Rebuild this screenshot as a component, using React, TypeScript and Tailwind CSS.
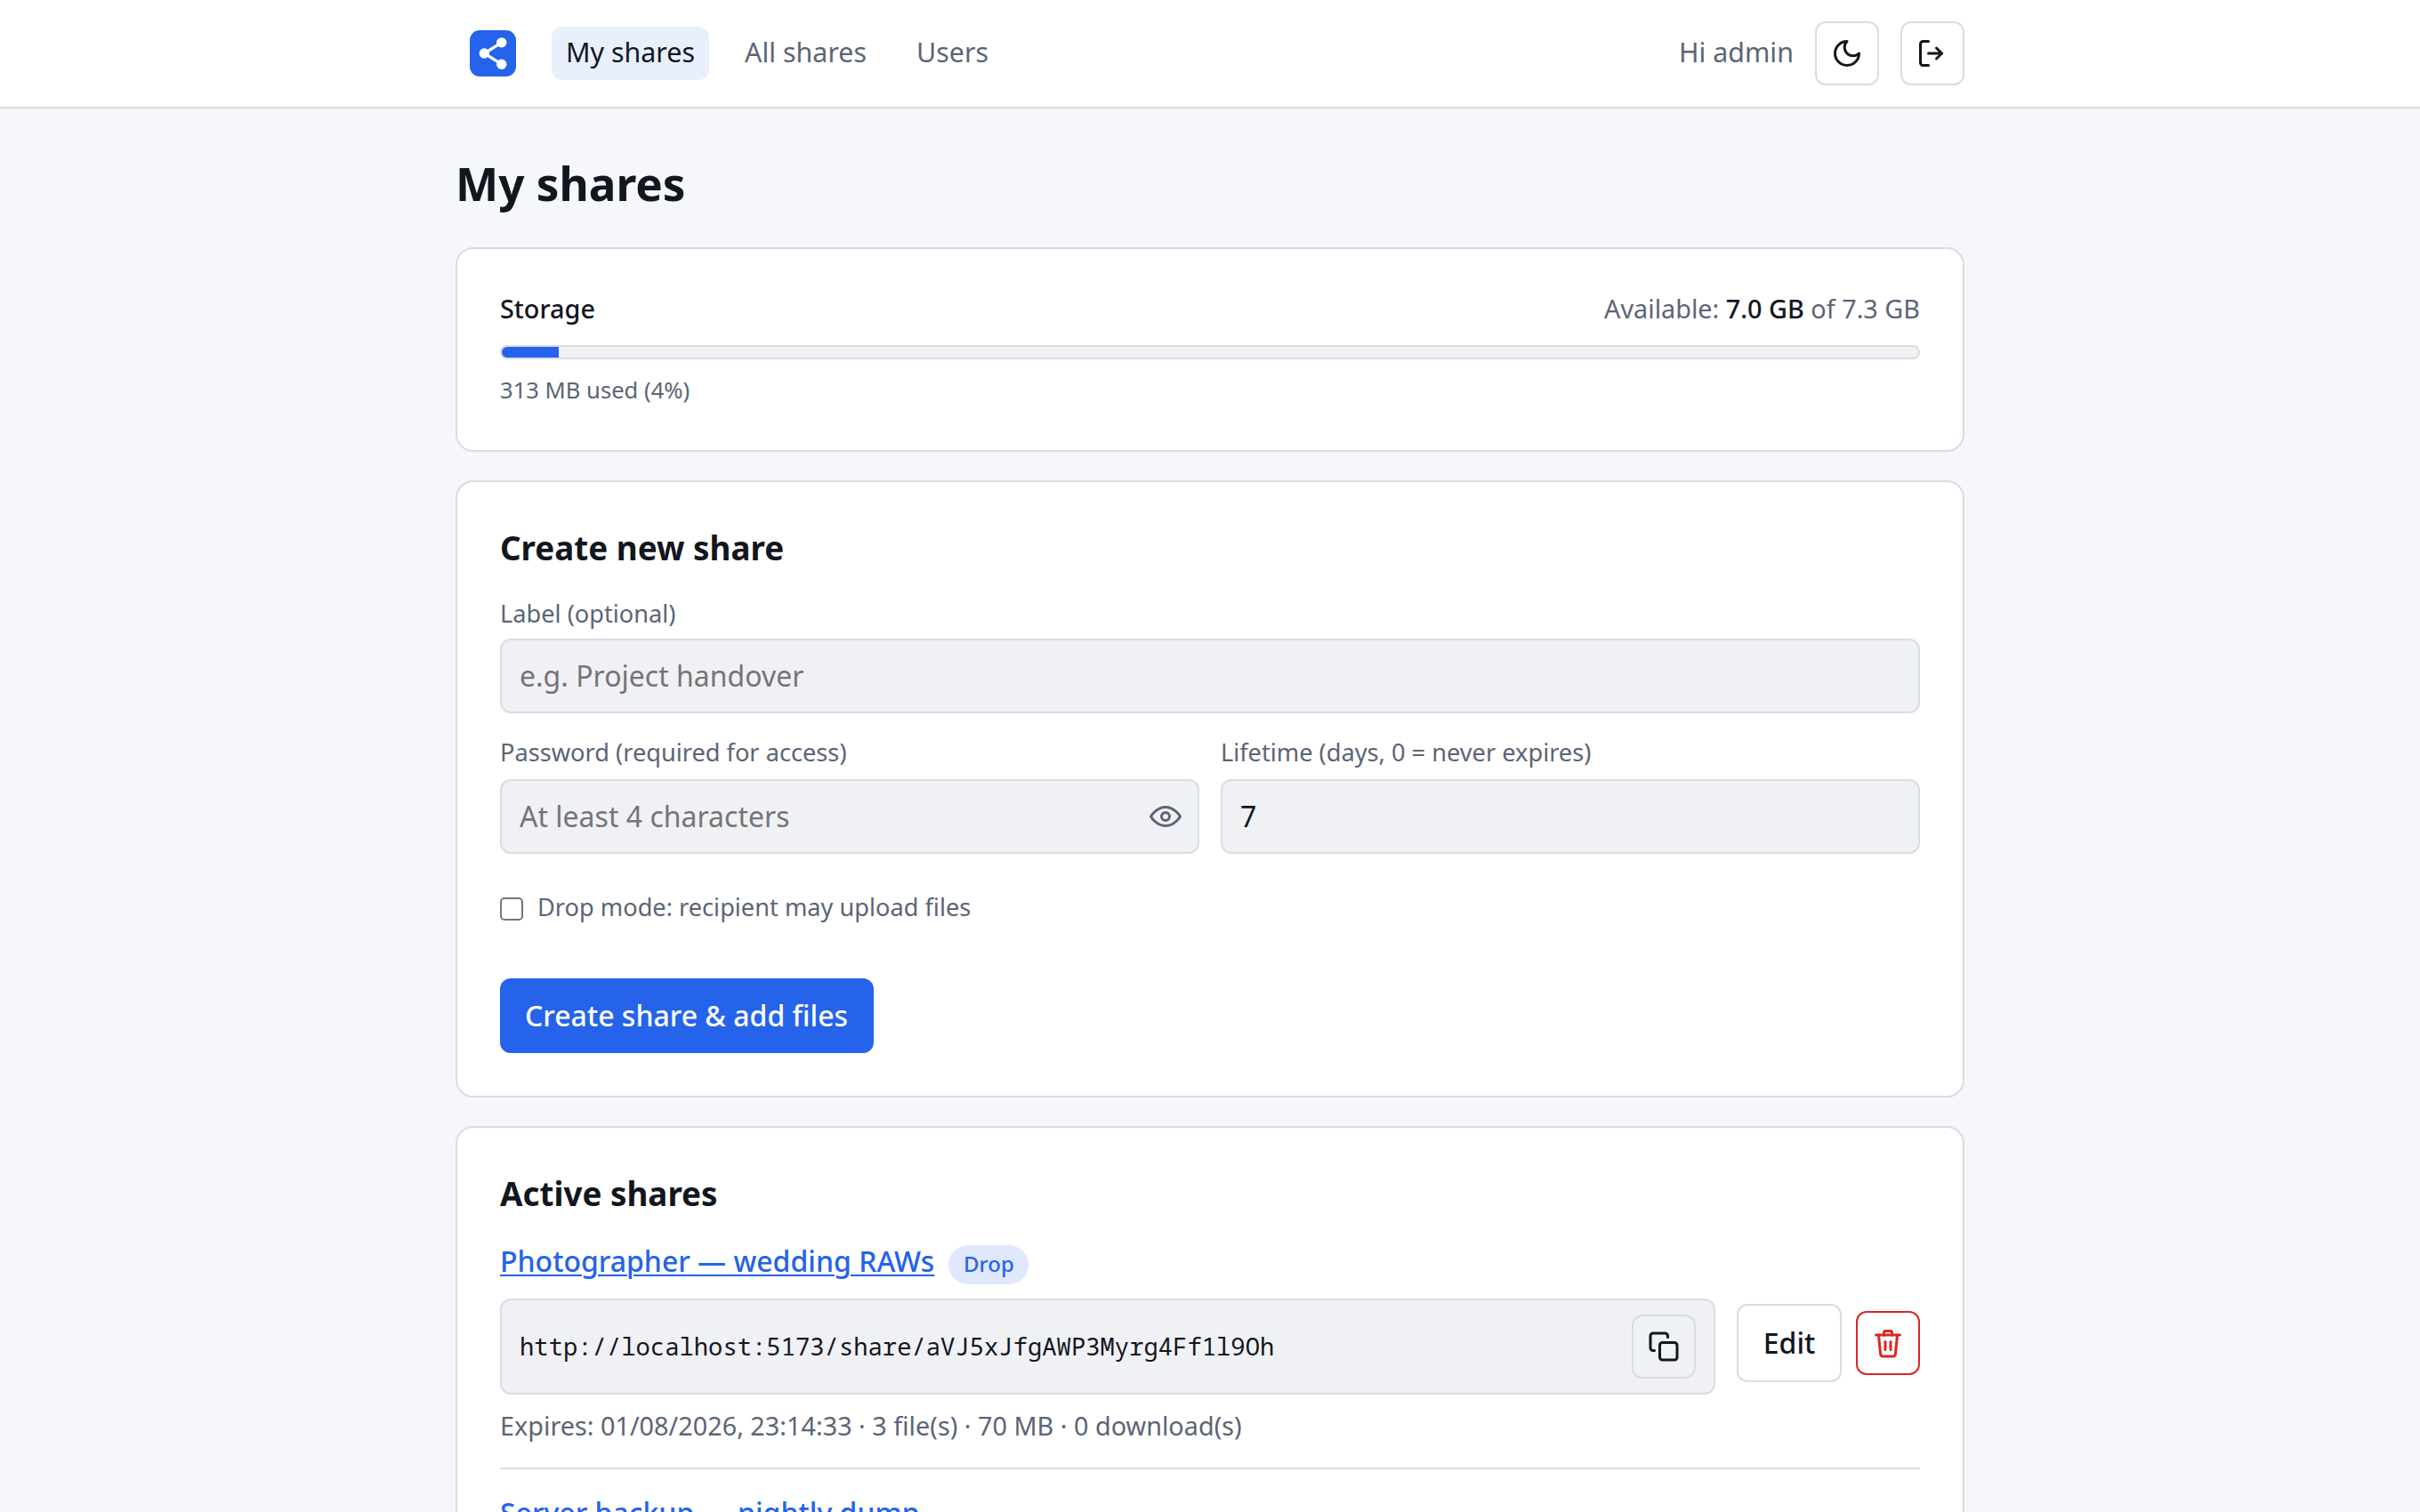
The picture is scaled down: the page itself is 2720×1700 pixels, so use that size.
import React, { useState } from 'react';

interface Share {
  id: string;
  label: string;
  drop: boolean;
  url?: string;
  meta?: string;
}

const shares: Share[] = [
  {
    id: 'aVJ5xJfgAWP3Myrg4Ff1l9Oh',
    label: 'Photographer — wedding RAWs',
    drop: true,
    url: 'http://localhost:5173/share/aVJ5xJfgAWP3Myrg4Ff1l9Oh',
    meta: 'Expires: 01/08/2026, 23:14:33 · 3 file(s) · 70 MB · 0 download(s)',
  },
  { id: 'backup', label: 'Server backup — nightly dump', drop: false },
];

const navItems = ['My shares', 'All shares', 'Users'];

function Icon({ children }: { children: React.ReactNode }) {
  return (
    <svg
      viewBox="0 0 24 24"
      className="w-9 h-9 shrink-0"
      fill="none"
      stroke="currentColor"
      strokeWidth={2}
      strokeLinecap="round"
      strokeLinejoin="round"
    >
      {children}
    </svg>
  );
}

function Logo() {
  return (
    <svg viewBox="0 0 32 32" className="w-[52px] h-[52px] shrink-0">
      <rect width="32" height="32" rx="7" fill="#2563eb" />
      <path d="M22 8.5 10 16l12 7.5" fill="none" stroke="#fff" strokeWidth="2" />
      <circle cx="22" cy="8.5" r="3.5" fill="#fff" />
      <circle cx="10" cy="16" r="3.5" fill="#fff" />
      <circle cx="22" cy="23.5" r="3.5" fill="#fff" />
    </svg>
  );
}

function IconButton({ danger, title, children }: { danger?: boolean; title: string; children: React.ReactNode }) {
  return (
    <button
      aria-label={title}
      className={`w-[72px] h-[72px] shrink-0 flex items-center justify-center rounded-xl border-2 ${
        danger ? 'border-[#dc2626] text-[#dc2626]' : 'border-[#d8dde4] text-[#12161e]'
      }`}
    >
      {children}
    </button>
  );
}

function Card({ children }: { children: React.ReactNode }) {
  return <section className="bg-white border-2 border-[#d8dde4] rounded-[20px] p-12 mb-8">{children}</section>;
}

export default function App() {
  const [active, setActive] = useState('My shares');
  const [showPassword, setShowPassword] = useState(false);
  const usedPercent = 4;

  return (
    <div className="h-screen overflow-hidden bg-[#f5f7fb] text-[#12161e] font-['Noto_Sans',sans-serif] text-[32px] leading-[48px]">
      <header className="bg-white border-b-2 border-[#d8dde4]">
        <div className="w-[1696px] h-[120px] mx-auto flex items-center">
          <div className="pl-4 mr-10">
            <Logo />
          </div>
          <nav className="flex gap-6">
            {navItems.map((item) => (
              <button
                key={item}
                onClick={() => setActive(item)}
                className={`h-[60px] px-4 rounded-xl text-[30.4px] leading-[58px] pb-0.5 ${
                  item === active ? 'bg-[#e9effd]' : 'text-[#5b6575]'
                }`}
              >
                {item}
              </button>
            ))}
          </nav>
          <div className="ml-auto flex items-center gap-6">
            <span className="text-[30.4px] text-[#5b6575] leading-[46px] pb-0.5">Hi admin</span>
            <IconButton title="Dark mode">
              <Icon>
                <path d="M12 3a6 6 0 0 0 9 9 9 9 0 1 1-9-9Z" />
              </Icon>
            </IconButton>
            <IconButton title="Log out">
              <Icon>
                <path d="M9 21H5a2 2 0 0 1-2-2V5a2 2 0 0 1 2-2h4" />
                <path d="m15 8 4 4-4 4" />
                <path d="M19 12H9" />
              </Icon>
            </IconButton>
          </div>
        </div>
      </header>

      <main className="w-[1696px] mx-auto pt-[52px]">
        <h1 className="text-[51.2px] leading-[64px] font-bold mb-10">My shares</h1>

        {/* Storage */}
        <Card>
          <div className="flex justify-between text-[28.8px] leading-[38px] mb-[22px]">
            <span className="font-medium">Storage</span>
            <span className="text-[#5b6575]">
              Available: <strong className="font-medium text-[#12161e]">7.0 GB</strong> of 7.3 GB
            </span>
          </div>
          <div className="h-4 rounded-full border-2 border-[#d8dde4] bg-[#f0f1f5] overflow-hidden">
            <div className="h-full bg-[#2563eb]" style={{ width: `${usedPercent}%` }} />
          </div>
          <p className="text-[25.6px] leading-[38px] mt-4 text-[#5b6575]">313 MB used (4%)</p>
        </Card>

        {/* Create */}
        <Card>
          <h2 className="text-[36.8px] leading-[52px] font-bold">Create new share</h2>
          <label className="block mt-7 text-[27.2px] leading-10 text-[#5b6575]">Label (optional)</label>
          <input
            placeholder="e.g. Project handover"
            className="block w-full h-[84px] mt-2 px-5 pb-0.5 rounded-xl border-2 border-[#d8dde4] bg-[#f0f1f5] placeholder:text-[#757575] outline-none"
          />
          <div className="grid grid-cols-2 gap-6 mt-6">
            <div>
              <label className="block text-[27.2px] leading-10 text-[#5b6575]">Password (required for access)</label>
              <div className="mt-2.5 h-[84px] flex items-center rounded-xl border-2 border-[#d8dde4] bg-[#f0f1f5] pl-5 pr-[18px]">
                <input
                  type={showPassword ? 'text' : 'password'}
                  placeholder="At least 4 characters"
                  className="flex-1 min-w-0 h-full pb-0.5 bg-transparent placeholder:text-[#757575] outline-none"
                />
                <button aria-label="Show password" onClick={() => setShowPassword(!showPassword)} className="text-[#5b6575]">
                  <Icon>
                    <path d="M1 12s4-7 11-7 11 7 11 7-4 7-11 7S1 12 1 12Z" />
                    <circle cx="12" cy="12" r="3" />
                  </Icon>
                </button>
              </div>
            </div>
            <div>
              <label className="block text-[27.2px] leading-10 text-[#5b6575]">Lifetime (days, 0 = never expires)</label>
              <input
                defaultValue="7"
                className="block w-full h-[84px] mt-2.5 px-5 pb-0.5 rounded-xl border-2 border-[#d8dde4] bg-[#f0f1f5] outline-none"
              />
            </div>
          </div>
          <label className="flex items-start gap-4 mt-10 text-[27.2px] leading-10 text-[#5b6575]">
            <input
              type="checkbox"
              className="appearance-none w-[26px] h-[26px] mt-[9px] rounded-[5px] border-2 border-[#767676] bg-white"
            />
            Drop mode: recipient may upload files
          </label>
          <button className="block mt-[60px] w-[420px] h-[84px] pl-7 rounded-xl bg-[#2563eb] text-white text-left font-medium">
            Create share &amp; add files
          </button>
        </Card>

        {/* Active shares */}
        <Card>
          <h2 className="text-[36.8px] leading-[52px] font-bold mb-[26px]">Active shares</h2>
          {shares.map((share) => (
            <div key={share.id} className="border-b-2 border-[#d8dde4] pb-[25px] mb-[25px]">
              <div className="flex items-start gap-4 mb-4">
                <a href="#" className="font-medium text-[#2563eb] underline underline-offset-[3px] decoration-2">
                  {share.label}
                </a>
                {share.drop && (
                  <span className="mt-1.5 w-[90px] h-11 rounded-full bg-[#dfe8fc] text-[#2563eb] text-2xl leading-[42px] font-medium text-center">
                    Drop
                  </span>
                )}
              </div>
              {share.url && (
                <div className="flex items-start">
                  <div className="flex-1 h-[108px] flex items-center justify-between px-5 rounded-xl border-2 border-[#d8dde4] bg-[#f0f1f5]">
                    <code className="font-['Noto_Sans_Mono','DejaVu_Sans_Mono',monospace] text-[27.2px]">{share.url}</code>
                    <IconButton title="Copy link">
                      <Icon>
                        <rect x="9" y="9" width="13" height="13" rx="2" />
                        <path d="M5 15H4a2 2 0 0 1-2-2V4a2 2 0 0 1 2-2h9a2 2 0 0 1 2 2v1" />
                      </Icon>
                    </IconButton>
                  </div>
                  <div className="ml-6 mt-1.5 flex items-center gap-4">
                    <button className="w-[118px] h-[88px] rounded-xl border-2 border-[#d8dde4] font-medium">Edit</button>
                    <IconButton danger title="Delete">
                      <Icon>
                        <path d="M3 6h18" />
                        <path d="M9 6V4a1 1 0 0 1 1-1h4a1 1 0 0 1 1 1v2" />
                        <path d="m19 6-1.4 14.2a2 2 0 0 1-2 1.8H8.4a2 2 0 0 1-2-1.8L5 6" />
                        <path d="M10 11v6M14 11v6" />
                      </Icon>
                    </IconButton>
                  </div>
                </div>
              )}
              {share.meta && <p className="mt-[13px] text-[28.8px] leading-[44px] text-[#5b6575]">{share.meta}</p>}
            </div>
          ))}
        </Card>
      </main>
    </div>
  );
}
